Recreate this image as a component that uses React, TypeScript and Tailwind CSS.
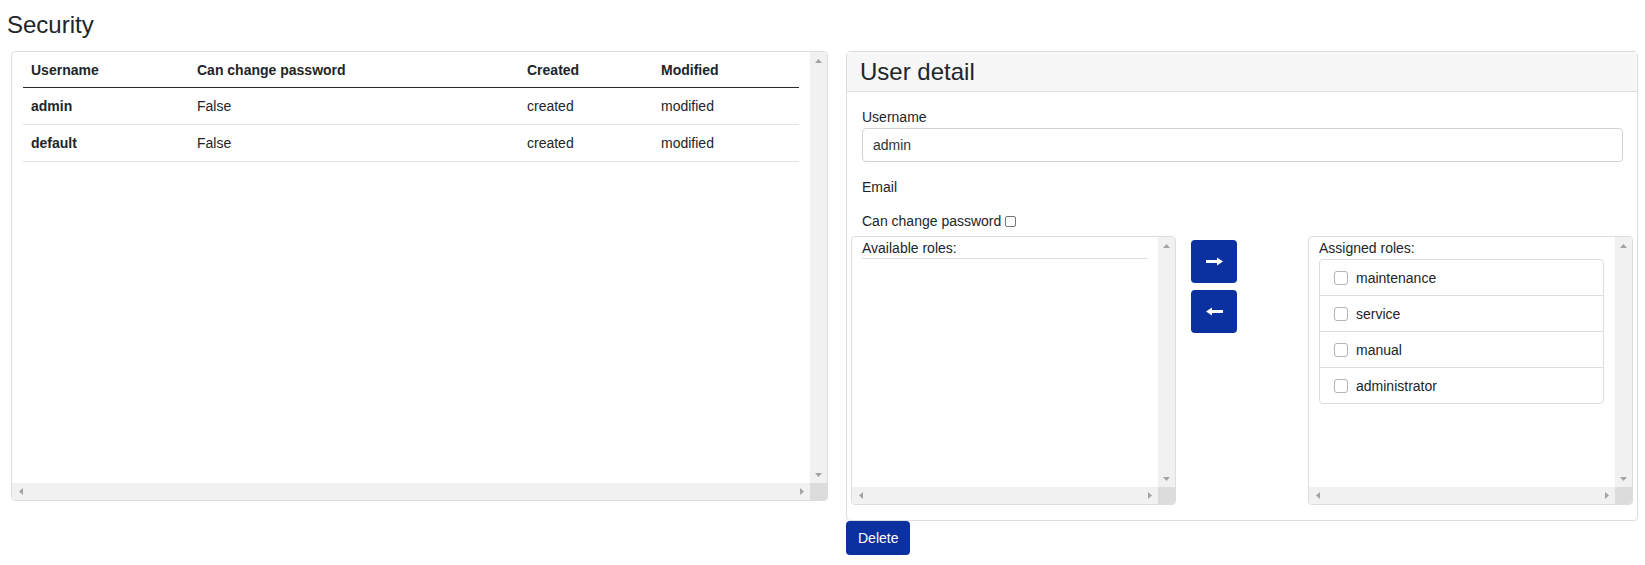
import React from "react";

const users = [
  { username: "admin", canChange: "False", created: "created", modified: "modified" },
  { username: "default", canChange: "False", created: "created", modified: "modified" },
];

const assignedRoles = ["maintenance", "service", "manual", "administrator"];

const Arrow: React.FC<{ dir: "up" | "down" | "left" | "right" }> = ({ dir }) => {
  if (dir === "up")
    return (
      <svg width="7" height="4" viewBox="0 0 7 4">
        <polygon points="0,4 3.5,0 7,4" fill="#a3a3a3" />
      </svg>
    );
  if (dir === "down")
    return (
      <svg width="7" height="4" viewBox="0 0 7 4">
        <polygon points="0,0 7,0 3.5,4" fill="#a3a3a3" />
      </svg>
    );
  if (dir === "left")
    return (
      <svg width="4" height="7" viewBox="0 0 4 7">
        <polygon points="4,0 4,7 0,3.5" fill="#a3a3a3" />
      </svg>
    );
  return (
    <svg width="4" height="7" viewBox="0 0 4 7">
      <polygon points="0,0 4,3.5 0,7" fill="#a3a3a3" />
    </svg>
  );
};

const VScroll: React.FC = () => (
  <div className="flex w-[17px] shrink-0 flex-col justify-between bg-[#f1f1f1]">
    <div className="flex h-[17px] items-center justify-center">
      <Arrow dir="up" />
    </div>
    <div className="flex h-[17px] items-center justify-center">
      <Arrow dir="down" />
    </div>
  </div>
);

const HScroll: React.FC = () => (
  <div className="flex h-[17px] shrink-0">
    <div className="flex flex-1 justify-between bg-[#f1f1f1]">
      <div className="flex w-[17px] items-center justify-center">
        <Arrow dir="left" />
      </div>
      <div className="flex w-[17px] items-center justify-center">
        <Arrow dir="right" />
      </div>
    </div>
    <div className="w-[17px] bg-[#dcdcdc]" />
  </div>
);

const ArrowButton: React.FC<{ dir: "left" | "right" }> = ({ dir }) => (
  <button className="flex h-[43px] w-[46px] items-center justify-center rounded-[4px] bg-[#0a319f]">
    <svg width="17" height="9" viewBox="0 0 17 9" className={dir === "left" ? "rotate-180" : ""}>
      <rect x="0" y="3" width="12" height="3" fill="#fff" />
      <polygon points="11,0.5 17,4.5 11,8.5" fill="#fff" />
    </svg>
  </button>
);

const App: React.FC = () => {
  return (
    <div className="h-[565px] w-[1645px] bg-white font-['Liberation_Sans',Arial,sans-serif] text-sm text-[#212529]">
      <h1 className="h-[51px] pl-[7px] pt-[10px] text-2xl leading-[30px] font-normal">Security</h1>

      <div className="flex items-start gap-[18px] pl-[11px]">
        {/* users table */}
        <div className="flex h-[450px] w-[817px] flex-col overflow-hidden rounded-[4px] border border-[#dddddd]">
          <div className="flex min-h-0 flex-1">
            <div className="flex-1 px-[11px]">
              <table className="w-[776px] table-fixed text-left">
                <colgroup>
                  <col className="w-[166px]" />
                  <col className="w-[330px]" />
                  <col className="w-[134px]" />
                  <col className="w-[146px]" />
                </colgroup>
                <thead>
                  <tr className="border-b border-[#2b2b2b]">
                    <th className="px-2 pt-[8px] pb-[7px] leading-5 font-bold">Username</th>
                    <th className="px-2 pt-[8px] pb-[7px] leading-5 font-bold">Can change password</th>
                    <th className="px-2 pt-[8px] pb-[7px] leading-5 font-bold">Created</th>
                    <th className="px-2 pt-[8px] pb-[7px] leading-5 font-bold">Modified</th>
                  </tr>
                </thead>
                <tbody>
                  {users.map((u) => (
                    <tr key={u.username} className="border-b border-[#dee2e6]">
                      <td className="px-2 py-2 leading-5 font-bold">{u.username}</td>
                      <td className="px-2 py-2 leading-5">{u.canChange}</td>
                      <td className="px-2 py-2 leading-5">{u.created}</td>
                      <td className="px-2 py-2 leading-5">{u.modified}</td>
                    </tr>
                  ))}
                </tbody>
              </table>
            </div>
            <VScroll />
          </div>
          <HScroll />
        </div>

        {/* user detail */}
        <div className="flex w-[792px] flex-col items-start">
          <div className="w-full rounded-[4px] border border-[#dddddd]">
            <div className="h-[40px] border-b border-[#dddddd] bg-[#f7f7f7] pl-[13px] pt-[5px] text-2xl leading-[29px]">
              User detail
            </div>
            <div className="pl-[15px] pr-[14px] pt-[15px] pb-[15px]">
              <div className="mb-[1px] leading-5">Username</div>
              <div className="flex h-[34px] items-center rounded-[4px] border border-[#cfd4da] px-[10px] text-[#333]">
                admin
              </div>
              <div className="mt-[15px] leading-5">Email</div>
              <div className="mt-[14px] flex items-center leading-5">
                Can change password
                <span className="ml-[4px] inline-block h-[11px] w-[11px] rounded-[2px] border border-[#767676] bg-white" />
              </div>

              <div className="-ml-[11px] -mr-[10px] mt-[5px] flex items-start">
                {/* available roles */}
                <div className="flex h-[269px] w-[325px] flex-col overflow-hidden rounded-[4px] border border-[#dddddd]">
                  <div className="flex min-h-0 flex-1">
                    <div className="flex-1 px-[10px]">
                      <div className="border-b border-[#dddddd] pt-[1px] leading-5">Available roles:</div>
                    </div>
                    <VScroll />
                  </div>
                  <HScroll />
                </div>

                <div className="ml-[15px] mt-[4px] flex flex-col gap-[7px]">
                  <ArrowButton dir="right" />
                  <ArrowButton dir="left" />
                </div>

                {/* assigned roles */}
                <div className="ml-[71px] flex h-[269px] w-[325px] flex-col overflow-hidden rounded-[4px] border border-[#dddddd]">
                  <div className="flex min-h-0 flex-1">
                    <div className="flex-1 pl-[10px] pr-[11px]">
                      <div className="pt-[1px] leading-5">Assigned roles:</div>
                      <div className="mt-[1px] rounded-[4px] border border-[#dddddd]">
                        {assignedRoles.map((role, i) => (
                          <div
                            key={role}
                            className={`flex h-[35px] items-center pl-[14px] ${
                              i < assignedRoles.length - 1 ? "box-content border-b border-[#dddddd]" : ""
                            }`}
                          >
                            <span className="inline-block h-[14px] w-[14px] rounded-[3px] border border-[#b5b5b5] bg-white" />
                            <span className="ml-[8px] leading-5">{role}</span>
                          </div>
                        ))}
                      </div>
                    </div>
                    <VScroll />
                  </div>
                  <HScroll />
                </div>
              </div>
            </div>
          </div>
          <button className="h-[34px] rounded-[4px] bg-[#0a319f] px-[12px] leading-5 text-white">Delete</button>
        </div>
      </div>
    </div>
  );
};

export default App;
